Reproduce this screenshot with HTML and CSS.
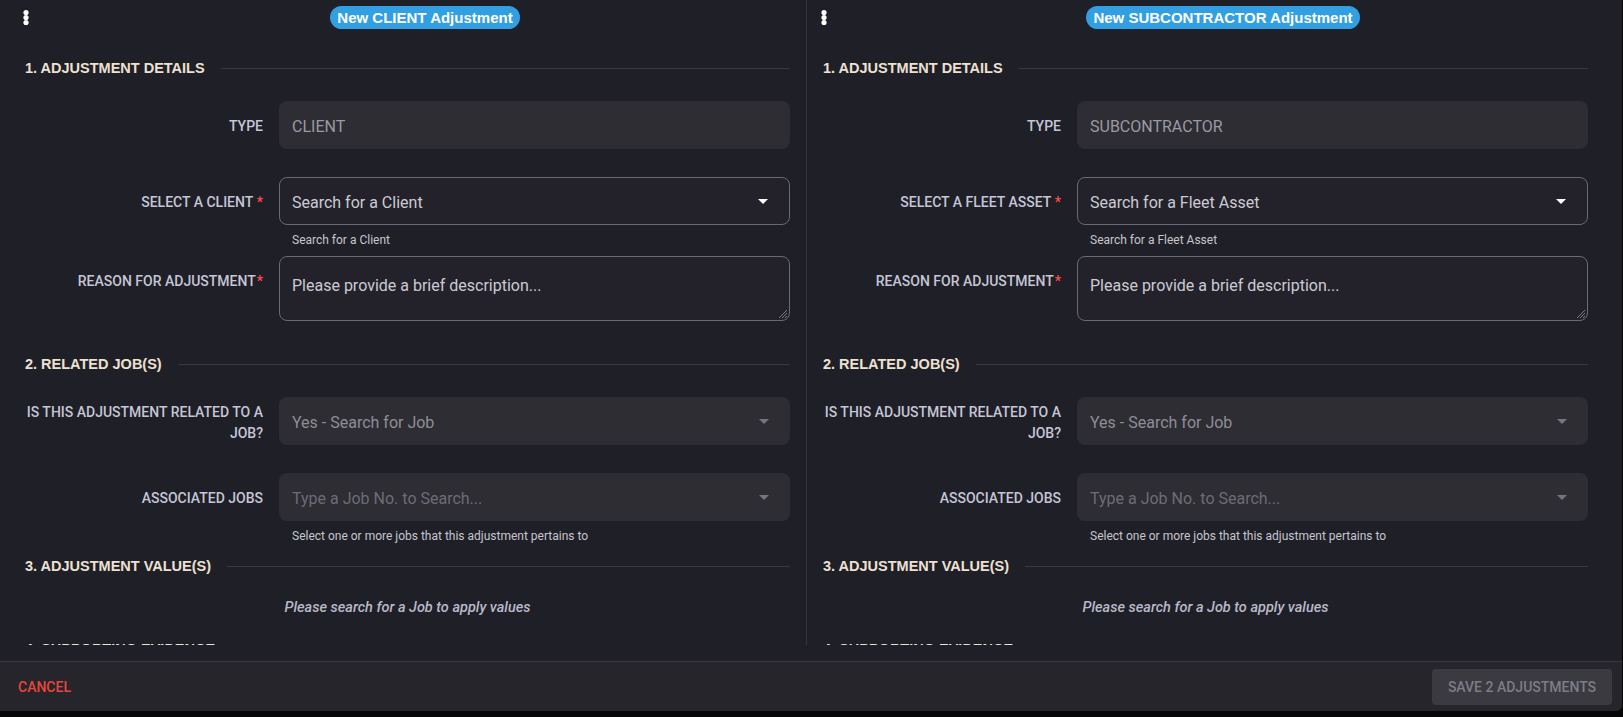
FILE: index.html
```html
<!DOCTYPE html>
<html lang="en">
<head>
    <meta charset="UTF-8">
    <meta name="viewport" content="width=device-width, initial-scale=1.0">
    <title>New Adjustments</title>

    <link rel="stylesheet" href="styles.css">
</head>
<body>

    <div class="dialog">
        <div class="panels">

            <!-- client adjustment -->
            <section class="col">
                <div class="col-head">
                    <svg class="dots" width="6" height="16" viewBox="0 0 6 16"><circle cx="3" cy="2.5" r="2.6"/><circle cx="3" cy="7.5" r="2.6"/><circle cx="3" cy="12.5" r="2.6"/></svg>
                    <div class="col-title"><span class="pill">New CLIENT Adjustment</span></div>
                </div>

                <h2 class="section-title">1. ADJUSTMENT DETAILS</h2>

                <div class="form-row first">
                    <div class="form-label">TYPE</div>
                    <div class="field filled"><span class="value muted">CLIENT</span></div>
                </div>

                <div class="form-row">
                    <div class="form-label">SELECT A CLIENT&nbsp;<span class="req">*</span></div>
                    <div class="field outlined">
                        <span class="value">Search for a Client</span>
                        <svg class="caret" width="10" height="5" viewBox="0 0 10 5"><polygon points="0,0 10,0 5,5"/></svg>
                    </div>
                </div>
                <div class="hint">Search for a Client</div>

                <div class="form-row after-hint">
                    <div class="form-label">REASON FOR ADJUSTMENT<span class="req tight">*</span></div>
                    <div class="field outlined area">
                        <span class="value">Please provide a brief description...</span>
                        <svg class="grip" width="12" height="12" viewBox="0 0 12 12"><path d="M11 3 L3 11 M11 6 L6 11 M11 9 L9 11"/></svg>
                    </div>
                </div>

                <h2 class="section-title">2. RELATED JOB(S)</h2>

                <div class="form-row first">
                    <div class="form-label">IS THIS ADJUSTMENT RELATED TO A<br>JOB?</div>
                    <div class="field filled">
                        <span class="value dim">Yes - Search for Job</span>
                        <svg class="caret off" width="10" height="5" viewBox="0 0 10 5"><polygon points="0,0 10,0 5,5"/></svg>
                    </div>
                </div>

                <div class="form-row">
                    <div class="form-label">ASSOCIATED JOBS</div>
                    <div class="field filled">
                        <span class="value faint">Type a Job No. to Search...</span>
                        <svg class="caret off" width="10" height="5" viewBox="0 0 10 5"><polygon points="0,0 10,0 5,5"/></svg>
                    </div>
                </div>
                <div class="hint">Select one or more jobs that this adjustment pertains to</div>

                <h2 class="section-title tight">3. ADJUSTMENT VALUE(S)</h2>
                <p class="empty-note">Please search for a Job to apply values</p>

                <h2 class="section-title loose">4. SUPPORTING EVIDENCE</h2>
            </section>

            <!-- subcontractor adjustment -->
            <section class="col">
                <div class="col-head">
                    <svg class="dots" width="6" height="16" viewBox="0 0 6 16"><circle cx="3" cy="2.5" r="2.6"/><circle cx="3" cy="7.5" r="2.6"/><circle cx="3" cy="12.5" r="2.6"/></svg>
                    <div class="col-title"><span class="pill">New SUBCONTRACTOR Adjustment</span></div>
                </div>

                <h2 class="section-title">1. ADJUSTMENT DETAILS</h2>

                <div class="form-row first">
                    <div class="form-label">TYPE</div>
                    <div class="field filled"><span class="value muted">SUBCONTRACTOR</span></div>
                </div>

                <div class="form-row">
                    <div class="form-label">SELECT A FLEET ASSET&nbsp;<span class="req">*</span></div>
                    <div class="field outlined">
                        <span class="value">Search for a Fleet Asset</span>
                        <svg class="caret" width="10" height="5" viewBox="0 0 10 5"><polygon points="0,0 10,0 5,5"/></svg>
                    </div>
                </div>
                <div class="hint">Search for a Fleet Asset</div>

                <div class="form-row after-hint">
                    <div class="form-label">REASON FOR ADJUSTMENT<span class="req tight">*</span></div>
                    <div class="field outlined area">
                        <span class="value">Please provide a brief description...</span>
                        <svg class="grip" width="12" height="12" viewBox="0 0 12 12"><path d="M11 3 L3 11 M11 6 L6 11 M11 9 L9 11"/></svg>
                    </div>
                </div>

                <h2 class="section-title">2. RELATED JOB(S)</h2>

                <div class="form-row first">
                    <div class="form-label">IS THIS ADJUSTMENT RELATED TO A<br>JOB?</div>
                    <div class="field filled">
                        <span class="value dim">Yes - Search for Job</span>
                        <svg class="caret off" width="10" height="5" viewBox="0 0 10 5"><polygon points="0,0 10,0 5,5"/></svg>
                    </div>
                </div>

                <div class="form-row">
                    <div class="form-label">ASSOCIATED JOBS</div>
                    <div class="field filled">
                        <span class="value faint">Type a Job No. to Search...</span>
                        <svg class="caret off" width="10" height="5" viewBox="0 0 10 5"><polygon points="0,0 10,0 5,5"/></svg>
                    </div>
                </div>
                <div class="hint">Select one or more jobs that this adjustment pertains to</div>

                <h2 class="section-title tight">3. ADJUSTMENT VALUE(S)</h2>
                <p class="empty-note">Please search for a Job to apply values</p>

                <h2 class="section-title loose">4. SUPPORTING EVIDENCE</h2>
            </section>

        </div>

        <div class="footer">
            <button class="btn-cancel">CANCEL</button>
            <button class="btn-save">SAVE 2 ADJUSTMENTS</button>
        </div>
    </div>

</body>
</html>
```

FILE: styles.css
```css
body{
    margin: 0;
    background-color: #060609;
    font-family: Roboto, "Liberation Sans", Arial, sans-serif;
}

.dialog{
    width: 1622px;
    height: 711px;
    display: flex;
    flex-direction: column;
    background-color: #1f1f27;
    border-bottom-right-radius: 6px;
    overflow: hidden;
}

.panels{
    height: 645px;
    display: grid;
    grid-template-columns: 806px 1fr;
    overflow: hidden;
}

.col{
    padding: 0 16px 0 25px;
}

.col + .col{
    border-left: 1px solid #34343d;
    padding: 0 34px 0 16px;
}

.col-head{
    height: 35px;
    display: flex;
    align-items: center;
}

.dots{
    margin-left: -2px;
    fill: #ffffff;
    overflow: visible;
}

.col-title{
    flex: 1;
    padding-left: 31px;
    text-align: center;
}

.pill{
    display: inline-block;
    height: 23px;
    line-height: 23px;
    padding: 0 7px;
    border-radius: 12px;
    background-color: #319fe1;
    color: #ffffff;
    font-family: "Liberation Sans", Arial, sans-serif;
    font-weight: bold;
    font-size: 15px;
}

.section-title{
    margin: 33px 0 0;
    height: 20px;
    display: flex;
    align-items: center;
    gap: 16px;
    font-family: "Liberation Sans", Arial, sans-serif;
    font-weight: bold;
    font-size: 14.5px;
    color: #ede1d2;
    white-space: nowrap;
}

.col-head + .section-title{
    margin-top: 23px;
}

.section-title::after{
    content: "";
    flex: 1;
    height: 1px;
    background-color: #393943;
}

.section-title.tight{
    margin-top: 12px;
}

.section-title.loose{
    margin-top: 21px;
}

.form-row{
    margin-top: 28px;
    display: grid;
    grid-template-columns: 238px 1fr;
    column-gap: 16px;
    align-items: start;
}

.form-row.first{
    margin-top: 23px;
}

.form-row.after-hint{
    margin-top: 8px;
}

.form-label{
    box-sizing: border-box;
    min-height: 48px;
    padding-top: 3px;
    display: flex;
    align-items: center;
    justify-content: flex-end;
    text-align: right;
    white-space: nowrap;
    font-size: 14px;
    font-weight: 500;
    line-height: 21px;
    color: #c5c6d6;
}

.req{
    color: #ff4d4d;
}

.req.tight{
    margin-left: 1px;
}

.field{
    position: relative;
    box-sizing: border-box;
    height: 48px;
    display: flex;
    align-items: center;
    padding: 3px 21px 0 13px;
    border-radius: 8px;
    font-size: 16px;
}

.field.filled{
    background-color: #2e2d34;
}

.field.outlined{
    background-color: #23222a;
    border: 1px solid #696977;
    padding-left: 12px;
}

.field.area{
    height: 65px;
    align-items: flex-start;
    padding-top: 19px;
}

.value{
    flex: 1;
    line-height: 20px;
    color: #cbcbd3;
}

.value.muted{
    color: #9a9aa3;
}

.value.dim{
    color: #8e8e96;
}

.value.faint{
    color: #6c6c74;
}

.caret{
    margin-top: -3px;
    fill: #ffffff;
}

.caret.off{
    fill: #76757d;
}

.grip{
    position: absolute;
    right: 1px;
    bottom: 1px;
    stroke: #7a7a86;
    stroke-width: 1;
    fill: none;
}

.hint{
    margin: 7px 0 0 267px;
    height: 16px;
    line-height: 16px;
    font-size: 12px;
    color: #c6c6ce;
}

.empty-note{
    margin: 22px 0 0;
    line-height: 20px;
    text-align: center;
    font-size: 14.5px;
    font-style: italic;
    font-weight: 500;
    color: #b9b9c9;
}

.footer{
    margin-top: auto;
    box-sizing: border-box;
    height: 50px;
    border-top: 1px solid #393940;
    background-color: #25252b;
    display: flex;
    justify-content: space-between;
    align-items: center;
    padding: 0 10px 0 18px;
}

.btn-cancel{
    border: none;
    background: none;
    padding: 0;
    font-family: Roboto, sans-serif;
    font-size: 14px;
    font-weight: 500;
    color: #e8453c;
}

.btn-save{
    height: 36px;
    width: 180px;
    border: none;
    border-radius: 4px;
    background-color: #3a3a40;
    font-family: Roboto, sans-serif;
    font-size: 14px;
    font-weight: 500;
    color: #7d7d85;
}
```
